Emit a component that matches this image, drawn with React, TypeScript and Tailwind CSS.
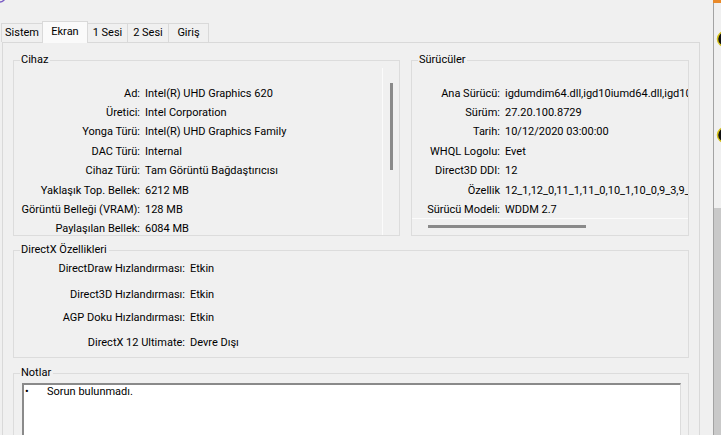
import React from "react";

const cihaz: [string, string][] = [
  ["Ad:", "Intel(R) UHD Graphics 620"],
  ["Üretici:", "Intel Corporation"],
  ["Yonga Türü:", "Intel(R) UHD Graphics Family"],
  ["DAC Türü:", "Internal"],
  ["Cihaz Türü:", "Tam Görüntü Bağdaştırıcısı"],
  ["Yaklaşık Top. Bellek:", "6212 MB"],
  ["Görüntü Belleği (VRAM):", "128 MB"],
  ["Paylaşılan Bellek:", "6084 MB"],
];

const suruculer: [string, string][] = [
  ["Ana Sürücü:", "igdumdim64.dll,igd10iumd64.dll,igd10iumd64.dll,igd12umd64.dll"],
  ["Sürüm:", "27.20.100.8729"],
  ["Tarih:", "10/12/2020 03:00:00"],
  ["WHQL Logolu:", "Evet"],
  ["Direct3D DDI:", "12"],
  ["Özellik", "12_1,12_0,11_1,11_0,10_1,10_0,9_3,9_2,9_1"],
  ["Sürücü Modeli:", "WDDM 2.7"],
];

const directx = [
  { label: "DirectDraw Hızlandırması:", value: "Etkin", gap: "mt-[3px]" },
  { label: "Direct3D Hızlandırması:", value: "Etkin", gap: "mt-[10px]" },
  { label: "AGP Doku Hızlandırması:", value: "Etkin", gap: "mt-[7px]" },
  { label: "DirectX 12 Ultimate:", value: "Devre Dışı", gap: "mt-[9px]" },
];

const tabs = ["Sistem", "Ekran", "1 Sesi", "2 Sesi", "Giriş"];

function Legend({ children }: { children: React.ReactNode }) {
  return <legend className="ml-[6px] pl-[1px] pr-[2px]">{children}</legend>;
}

function TabStrip() {
  return (
    <div className="flex h-[21px] items-end pl-[1px]">
      <div className="flex h-[19px] w-[41px] items-center justify-center border-l border-t border-[#d9d9d9]">
        {tabs[0]}
      </div>
      <div className="relative z-10 -mb-px flex h-[22px] w-[46px] justify-center border-x border-t border-[#d9d9d9] bg-[#fafafa] pt-[2px]">
        {tabs[1]}
      </div>
      <div className="flex h-[19px] w-[40px] items-center justify-center border-r border-t border-[#d9d9d9]">
        {tabs[2]}
      </div>
      <div className="flex h-[19px] w-[41px] items-center justify-center border-r border-t border-[#d9d9d9]">
        {tabs[3]}
      </div>
      <div className="flex h-[19px] w-[40px] items-center justify-center border-r border-t border-[#d9d9d9]">
        {tabs[4]}
      </div>
    </div>
  );
}

export default function App() {
  return (
    <div className="flex h-[435px] w-[721px] overflow-hidden bg-[#f0f0f0] text-[11px] leading-[16px] text-black [font-family:Roboto,'Noto_Sans',sans-serif]">
      {/* dialog */}
      <div className="flex w-[713px] flex-col">
        <div className="h-[21px]">
          <svg width="8" height="5" className="block">
            <circle cx="0" cy="-3" r="5" fill="none" stroke="#7a5cc4" strokeWidth="1.5" />
          </svg>
        </div>
        <TabStrip />

        <div className="ml-[2px] mr-[13px] flex-1 overflow-hidden border-x border-t border-[#d9d9d9] pl-[10px] pt-[9px]">
          <div className="flex gap-[11px]">
            <fieldset className="h-[184px] w-[387px] min-w-0 shrink-0 border border-[#dcdcdc]">
              <Legend>Cihaz</Legend>
              <div className="flex h-[167px]">
                <div className="min-w-0 flex-1 overflow-hidden pt-[16px]">
                  {cihaz.map(([l, v]) => (
                    <div key={l} className="flex h-[19.4px] items-center whitespace-nowrap">
                      <span className="w-[126px] shrink-0 text-right">{l}</span>
                      <span className="pl-[5px]">{v}</span>
                    </div>
                  ))}
                </div>
                <div className="w-[17px] shrink-0 border-l border-[#fbfbfb] pl-[7px] pt-[15px]">
                  <div className="h-[87px] w-[3px] bg-[#8a8a8a]" />
                </div>
              </div>
            </fieldset>

            <fieldset className="h-[184px] w-[278px] min-w-0 shrink-0 overflow-hidden border border-[#dcdcdc]">
              <Legend>Sürücüler</Legend>
              <div className="flex h-[167px] flex-col">
                <div className="min-w-0 flex-1 overflow-hidden pt-[16px]">
                  {suruculer.map(([l, v]) => (
                    <div key={l} className="flex h-[19.4px] items-center whitespace-nowrap">
                      <span className="w-[88px] shrink-0 text-right">{l}</span>
                      <span className="pl-[5px]">{v}</span>
                    </div>
                  ))}
                </div>
                <div className="h-[17px] border-t border-[#fbfbfb] pl-[16px] pt-[6px]">
                  <div className="h-[3px] w-[158px] bg-[#8a8a8a]" />
                </div>
              </div>
            </fieldset>
          </div>

          <fieldset className="mt-[6px] h-[116px] w-[676px] min-w-0 border border-[#dcdcdc]">
            <Legend>DirectX Özellikleri</Legend>
            {directx.map((r) => (
              <div key={r.label} className={`flex h-[16px] items-center whitespace-nowrap ${r.gap}`}>
                <span className="w-[171px] shrink-0 text-right">{r.label}</span>
                <span className="pl-[5px]">{r.value}</span>
              </div>
            ))}
          </fieldset>

          <fieldset className="mt-[7px] h-[200px] w-[676px] min-w-0 border border-[#dcdcdc]">
            <Legend>Notlar</Legend>
            <div className="ml-[8px] mr-[7px] mt-[2px] h-[120px] border-l-2 border-r border-t-2 border-l-[#8a8a8a] border-r-[#dcdcdc] border-t-[#8a8a8a] bg-white">
              <div className="flex leading-[13px]">
                <span className="w-[23px] pl-[1px]">•</span>
                <span>Sorun bulunmadı.</span>
              </div>
            </div>
          </fieldset>
        </div>
      </div>

      {/* edge of the window behind */}
      <div className="flex w-[8px] flex-col">
        <div className="h-[3px] bg-[#e98a2a]" />
        <div className="flex flex-1 flex-col border-l border-[#a3a3a3]">
          <div className="h-[205px] overflow-hidden">
            <svg width="7" height="205" className="block">
              <circle cx="11" cy="36" r="7.5" fill="#111" stroke="#d6c21a" strokeWidth="1.5" />
              <circle cx="11" cy="132" r="7.5" fill="#111" stroke="#d6c21a" strokeWidth="1.5" />
            </svg>
          </div>
          <div className="flex-1 bg-[#c9c9c9]" />
        </div>
      </div>
    </div>
  );
}
